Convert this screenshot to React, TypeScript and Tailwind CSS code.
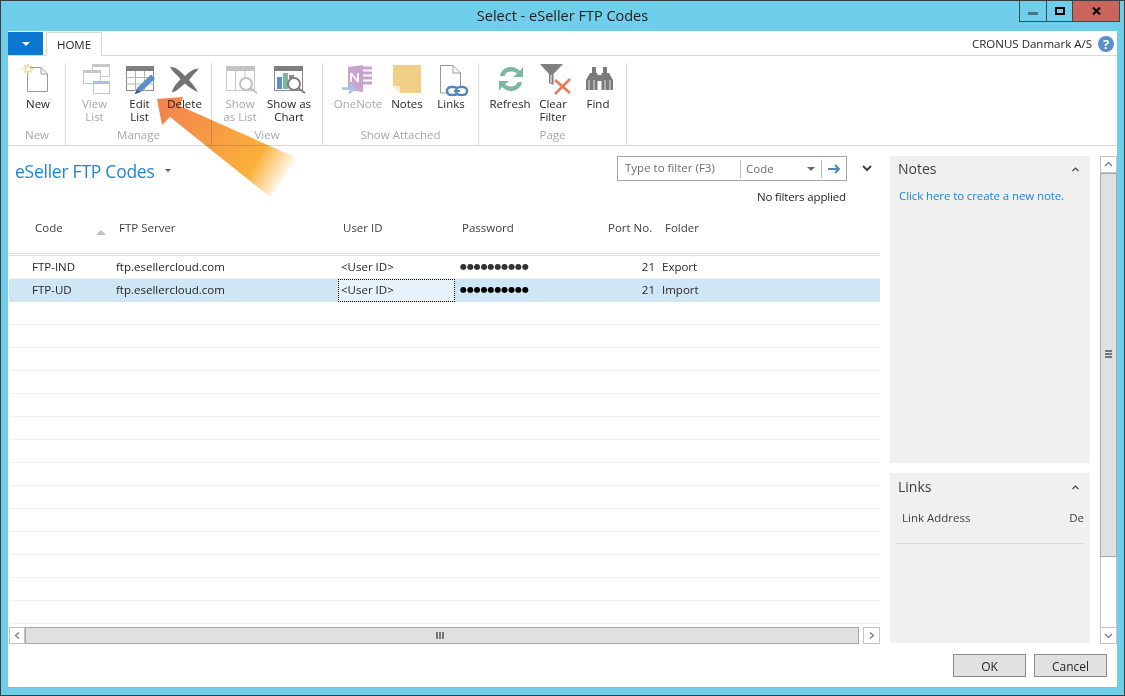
import React from "react";

const ink = "#262626";

function Ic({ vb, children }: { vb: string; children: React.ReactNode }) {
  return (
    <svg width="36" height="34" viewBox={vb} className="block">
      {children}
    </svg>
  );
}

function Item({ w, lines, dim, vb, icon }: { w: string; lines: string[]; dim?: boolean; vb: string; icon: React.ReactNode }) {
  return (
    <div className={`${w} flex flex-col items-center shrink-0`}>
      <Ic vb={vb}>{icon}</Ic>
      <div className={`mt-[1px] text-center text-[11.5px] leading-[13px] whitespace-nowrap ${dim ? "text-[#a8a8a8]" : "text-[#262626]"}`}>
        {lines.map((l) => (
          <div key={l}>{l}</div>
        ))}
      </div>
    </div>
  );
}

function Group({ w, pl, label, children }: { w: string; pl: string; label: string; children: React.ReactNode }) {
  return (
    <div className={`${w} shrink-0 flex flex-col h-[82px] mt-[7px] border-r border-[#d9d9d9]`}>
      <div className={`${pl} flex h-[66px] -mt-[1px]`}>{children}</div>
      <div className="text-center text-[11.5px] leading-[14px] text-[#a8a8a8] whitespace-nowrap">{label}</div>
    </div>
  );
}

const rows = [
  { code: "FTP-IND", server: "ftp.esellercloud.com", user: "<User ID>", port: "21", folder: "Export" },
  { code: "FTP-UD", server: "ftp.esellercloud.com", user: "<User ID>", port: "21", folder: "Import", sel: true },
];

function Chevron({ d, c = "#555" }: { d: string; c?: string }) {
  return (
    <svg width="9" height="7" viewBox="0 0 9 7">
      <path d={d} fill="none" stroke={c} strokeWidth="1.2" />
    </svg>
  );
}

export default function App() {
  return (
    <div
      className="relative w-[1125px] h-[696px] overflow-hidden bg-[#6fcfeb] border border-[#3c3f41] flex flex-col text-[11.5px] text-[#262626]"
      style={{ fontFamily: '"Open Sans", "Noto Sans", sans-serif', color: ink }}
    >
      {/* title bar */}
      <div className="h-[30px] grid grid-cols-[1fr_auto_1fr] shrink-0">
        <div />
        <div className="pt-[6px] text-[14.5px] leading-[18px] text-[#222]">Select - eSeller FTP Codes</div>
        <div className="flex justify-end pr-[4px]">
          <div className="flex h-[21px] border border-t-0 border-[#3f4a50]">
            <div className="w-[27px] flex items-center justify-center border-r border-[#3f4a50]">
              <div className="w-[10px] h-[3px] mt-[4px] bg-[#46768a]" />
            </div>
            <div className="w-[26px] flex items-center justify-center border-r border-[#3f4a50]">
              <div className="w-[10px] h-[8px] border-2 border-black" />
            </div>
            <div className="w-[46px] flex items-center justify-center bg-[#c9655a]">
              <svg width="9" height="8" viewBox="0 0 9 8">
                <path d="M1 0.5 L8 7.5 M8 0.5 L1 7.5" stroke="#000" strokeWidth="2" />
              </svg>
            </div>
          </div>
        </div>
      </div>

      {/* window body */}
      <div className="mx-[7px] h-[657px] bg-white border-b border-[#b0b0b0] flex flex-col shrink-0">
        {/* ribbon tabs */}
        <div className="h-[25px] shrink-0 flex items-end border-b border-[#d9d9d9] relative">
          <div className="w-[35px] h-[23px] mb-0 bg-[#0b78d0] flex items-center justify-center">
            <div className="w-0 h-0 border-l-[4px] border-r-[4px] border-t-[4px] border-l-transparent border-r-transparent border-t-white" />
          </div>
          <div className="ml-[3px] w-[56px] h-[24px] -mb-[1px] bg-white border border-b-0 border-[#d9d9d9] text-center leading-[24px] text-[11.5px]">
            HOME
          </div>
          <div className="flex-1" />
          <div className="mb-[3px] mr-[6px] text-[11.5px] leading-[16px]">CRONUS Danmark A/S</div>
          <div className="mb-[3px] mr-[3px] w-[16px] h-[16px] rounded-full bg-[#5b8fc7] text-white font-bold text-[13px] leading-[16px] text-center">?</div>
        </div>

        {/* ribbon */}
        <div className="h-[90px] shrink-0 border-b border-[#d9d9d9] flex pl-[1px]">
          <Group w="w-[57px]" pl="pl-[8px]" label="New">
            <Item w="w-[42px]" lines={["New"]} vb="20 61 36 34" icon={
              <>
                <path d="M27.5 66.5H41L47.5 73V90.5H27.5Z" fill="#fff" stroke="#9a9a9a" />
                <path d="M41 66.5V73H47.5" fill="none" stroke="#9a9a9a" />
                <g stroke="#f2cf86" strokeWidth="1.6">
                  <path d="M28 63V73M23 68H33M24.5 64.5L31.5 71.5M31.5 64.5L24.5 71.5" />
                </g>
                <circle cx="28" cy="68" r="2" fill="#fff" />
              </>
            } />
          </Group>
          <Group w="w-[146px]" pl="pl-[6px]" label="Manage">
            <Item w="w-[45px]" dim lines={["View", "List"]} vb="76 61 36 34" icon={
              <>
                <rect x="91.5" y="63.5" width="17" height="12" fill="#fff" stroke="#c8c8c8" />
                <rect x="91" y="63" width="18" height="3" fill="#c8c8c8" />
                <rect x="82.5" y="69.5" width="17" height="13" fill="#fff" stroke="#c8c8c8" />
                <rect x="82" y="69" width="18" height="3" fill="#c8c8c8" />
                <rect x="92.5" y="80.5" width="16" height="12" fill="#fff" stroke="#c8c8c8" />
                <rect x="92" y="80" width="17" height="3" fill="#a9c4e0" />
              </>
            } />
            <Item w="w-[45px]" lines={["Edit", "List"]} vb="122 61 36 34" icon={
              <>
                <rect x="126.5" y="65.5" width="27" height="24" fill="#fff" stroke="#8a8a8a" />
                <rect x="126" y="65" width="28" height="5" fill="#7f7f7f" />
                <path d="M126 76.5H154M126 83H154M135.5 70V90M144.5 70V90" stroke="#b5b5b5" />
                <path d="M135 93L137 87L151 73.5L155 77.5L141 91Z" fill="#5b8fc7" />
                <path d="M135 93L137 88L140 91Z" fill="#3d5f85" />
              </>
            } />
            <Item w="w-[45px]" lines={["Delete"]} vb="167 61 36 34" icon={
              <path d="M170 66C176 65.500 181 71 185 75C189 71 194 67.500 199 67.500C196 71 192 75 189 79C192 82.500 196 87 198 91C193 89.500 188.500 85.500 185 82.500C181 86 176 90.500 172 91.500C172.500 87 177 82 180.500 78C177 74 172.500 70.500 170 66Z" fill="#737373" />
            } />
          </Group>
          <Group w="w-[111px]" pl="pl-[5px]" label="View">
            <Item w="w-[46px]" dim lines={["Show", "as List"]} vb="223 61 36 34" icon={
              <>
                <rect x="227.500" y="65.500" width="28" height="24" fill="#fff" stroke="#c8c8c8" />
                <rect x="227" y="65" width="29" height="5" fill="#c4c4c4" />
                <path d="M236.500 70V90M246 70V78" stroke="#c8c8c8" />
                <circle cx="247" cy="83" r="6" fill="#fff" stroke="#c0c0c0" strokeWidth="2" />
                <path d="M251 87L258 92" stroke="#c0c0c0" strokeWidth="2" />
              </>
            } />
            <Item w="w-[52px]" lines={["Show as", "Chart"]} vb="272 61 36 34" icon={
              <>
                <rect x="275.500" y="65.500" width="28" height="24" fill="#fff" stroke="#8a8a8a" />
                <rect x="275" y="65" width="29" height="5" fill="#7f7f7f" />
                <rect x="278" y="76" width="5" height="12" fill="#5b8fc7" />
                <rect x="284" y="72" width="5" height="16" fill="#7fb5a3" />
                <rect x="290" y="74" width="5" height="8" fill="#8a8a8a" />
                <circle cx="295" cy="83" r="6" fill="#fff" stroke="#7f7f7f" strokeWidth="2" />
                <path d="M299 87L306 92" stroke="#7f7f7f" strokeWidth="2" />
              </>
            } />
          </Group>
          <Group w="w-[156px]" pl="pl-[10px]" label="Show Attached">
            <Item w="w-[50px]" dim lines={["OneNote"]} vb="340 61 36 34" icon={
              <>
                <path d="M348 66L363 64V91L348 89Z" fill="#c9a3cf" />
                <path d="M363 67H372M363 72H372M363 77H372M363 82H372" stroke="#c9a3cf" strokeWidth="3" />
                <path d="M351 72V81M351 72L358 81M358 72V81" stroke="#fff" strokeWidth="1.800" fill="none" />
                <path d="M342 87.500H352M349 83L355 87.500L349 92" fill="none" stroke="#a9c4e0" strokeWidth="2.500" />
              </>
            } />
            <Item w="w-[48px]" lines={["Notes"]} vb="389 61 36 34" icon={
              <>
                <path d="M393 64H421V92H400L393 85Z" fill="#f2cf86" />
                <path d="M393 85H400V92Z" fill="#fbeccc" />
              </>
            } />
            <Item w="w-[40px]" lines={["Links"]} vb="433 61 36 34" icon={
              <>
                <path d="M440.500 64.500H453L460.500 72V92H440.500Z" fill="#fff" stroke="#9a9a9a" />
                <path d="M453 64.500V72H460.500" fill="none" stroke="#9a9a9a" />
                <rect x="447" y="86" width="11" height="8" rx="4" fill="#fff" stroke="#4f86bf" strokeWidth="2.500" />
                <rect x="456" y="86" width="11" height="8" rx="4" fill="#fff" stroke="#4f86bf" strokeWidth="2.500" />
                <path d="M454 90H460" stroke="#4f86bf" strokeWidth="2" />
              </>
            } />
          </Group>
          <Group w="w-[148px]" pl="pl-[10px]" label="Page">
            <Item w="w-[42px]" lines={["Refresh"]} vb="492 61 36 34" icon={
              <>
                <path d="M500 75C501 69 506 66 511 66C515 66 518 68 520 70L523 66V76H513L517 72.500C515 71 513 70.500 511 70.500C508 70.500 505 72 504.500 75Z" fill="#7fb5a3" />
                <path d="M522 81C521 87 516 90 511 90C507 90 504 88 502 86L499 90V80H509L505 83.500C507 85 509 85.500 511 85.500C514 85.500 517 84 517.500 81Z" fill="#7fb5a3" />
              </>
            } />
            <Item w="w-[44px]" lines={["Clear", "Filter"]} vb="535 61 36 34" icon={
              <>
                <path d="M540 63H563L553.500 73V84L549 82V73Z" fill="#808080" />
                <path d="M551 74V82" stroke="#d8d8d8" strokeWidth="1.500" />
                <path d="M555 79L570 92M570 78L555 93" stroke="#e3785a" strokeWidth="2.500" />
              </>
            } />
            <Item w="w-[46px]" lines={["Find"]} vb="580 61 36 34" icon={
              <>
                <path d="M592 66H596V72H597.500V89H586V79L590 72H592Z" fill="#7a7a7a" />
                <path d="M603 66H607V72H609L613 79V89H601.500V72H603Z" fill="#7a7a7a" />
                <rect x="597" y="74" width="5" height="6" fill="#7a7a7a" />
                <path d="M589 79V89M594 79V89M605 79V89M610 79V89" stroke="#fff" strokeWidth="1" opacity="0.8" />
              </>
            } />
          </Group>
        </div>

        {/* main */}
        <div className="flex flex-1 min-h-0 pl-[1px]">
          {/* list */}
          <div className="w-[871px] shrink-0 flex flex-col">
            <div className="h-[107px] shrink-0 flex flex-col">
              <div className="flex h-[36px] items-start pt-[10px]">
                <div className="ml-[6px] mt-[3px] text-[17.5px] leading-[24px] text-[#1f84d8] tracking-[-0.25px] whitespace-nowrap">eSeller FTP Codes</div>
                <div className="ml-[10px] mt-[13px] w-0 h-0 border-l-[3px] border-r-[3px] border-t-[3px] border-l-transparent border-r-transparent border-t-[#555]" />
                <div className="flex-1" />
                <div className="w-[230px] h-[25px] border border-[#a6a6a6] flex items-center text-[11.5px] text-[#6e6e6e]">
                  <div className="w-[123px] pl-[7px] border-r border-[#bbb] h-[18px] leading-[16px] whitespace-nowrap">Type to filter (F3)</div>
                  <div className="pl-[5px] flex-1 leading-[18px]">Code</div>
                  <div className="w-0 h-0 mr-[6px] border-l-[4px] border-r-[4px] border-t-[4px] border-l-transparent border-r-transparent border-t-[#666]" />
                  <div className="w-[25px] h-[18px] border-l border-[#bbb] flex items-center justify-center">
                    <svg width="13" height="10" viewBox="0 0 13 10">
                      <path d="M0 5H11M7 1L11 5L7 9" fill="none" stroke="#4f86bf" strokeWidth="2" />
                    </svg>
                  </div>
                </div>
                <div className="w-[33px] h-[25px] pl-[6px] flex items-center justify-center">
                  <svg width="10" height="7" viewBox="0 0 10 7">
                    <path d="M1 1L5 5L9 1" fill="none" stroke="#444" strokeWidth="2" />
                  </svg>
                </div>
              </div>
              <div className="mt-[7px] pr-[34px] text-right leading-[16px] tracking-[-0.15px]">No filters applied</div>
              <div className="mt-[15px] flex leading-[16px] text-[#404040] relative">
                <div className="w-[110px] pl-[26px]">Code</div>
                <div className="w-[224px]">FTP Server</div>
                <div className="w-[119px]">User ID</div>
                <div className="w-[146px]">Password</div>
                <div className="w-[44px] text-right whitespace-nowrap">Port No.</div>
                <div className="pl-[13px]">Folder</div>
                <div className="absolute left-[87px] top-[10px] w-0 h-0 border-l-[5px] border-r-[5px] border-b-[5px] border-l-transparent border-r-transparent border-b-[#c0c0c0]" />
              </div>
            </div>
            <div className="h-[3px] shrink-0 border-y border-[#dedede]" />
            {rows.map((r) => (
              <div key={r.code} className={`h-[23px] shrink-0 flex items-center leading-[16px] border-b ${r.sel ? "bg-[#cfe6f5] border-[#cfe6f5]" : "border-[#f0f0f0]"}`}>
                <div className="w-[107px] pl-[23px]">{r.code}</div>
                <div className="w-[222px]">{r.server}</div>
                <div className={`w-[117px] h-[23px] pl-[2px] leading-[19px] -mb-[1px] ${r.sel ? "bg-[#e6f3fa] border border-dotted border-black" : "border border-transparent"}`}>{r.user}</div>
                <div className={`w-[142px] pl-[5px] text-[8px] tracking-[-0.1px] ${r.sel ? "text-black" : "text-[#333]"}`} style={{ fontFamily: '"DejaVu Sans", sans-serif' }}>●●●●●●●●●●</div>
                <div className="w-[58px] text-right">{r.port}</div>
                <div className="pl-[7px]">{r.folder}</div>
              </div>
            ))}
            {Array.from({ length: 14 }).map((_, i) => (
              <div key={i} className="h-[23px] shrink-0 border-b border-[#f0f0f0]" />
            ))}
            {/* horizontal scrollbar */}
            <div className="mt-[3px] h-[17px] shrink-0 flex">
              <div className="w-[16px] border border-[#c4c4c4] flex items-center justify-center">
                <Chevron d="M6 0.500L2.500 3.500L6 6.500" c="#777" />
              </div>
              <div className="flex-1 bg-[#e0e0e0] border border-[#a8a8a8] flex items-center justify-center pr-[4px]">
                <div className="w-[8px] h-[7px] border-x-2 border-[#777] flex justify-center">
                  <div className="w-[2px] bg-[#777]" />
                </div>
              </div>
              <div className="w-[4px]" />
              <div className="w-[17px] border border-[#c4c4c4] flex items-center justify-center">
                <Chevron d="M3 0.500L6.500 3.500L3 6.500" c="#777" />
              </div>
            </div>
          </div>

          {/* factboxes */}
          <div className="ml-[10px] w-[200px] shrink-0 pt-[10px] flex flex-col gap-[10px]">
            <div className="h-[308px] bg-[#f0f0f0] pt-[4px]">
              <div className="flex items-center justify-between pl-[8px] pr-[10px] text-[14px] leading-[18px] text-[#404040]">
                Notes
                <Chevron d="M1.500 5L4.500 2L7.500 5" c="#444" />
              </div>
              <div className="mt-[10px] pl-[9px] text-[#1f84d8] leading-[16px] tracking-[-0.1px] whitespace-nowrap">Click here to create a new note.</div>
            </div>
            <div className="h-[170px] bg-[#f0f0f0] pt-[5px]">
              <div className="flex items-center justify-between pl-[8px] pr-[10px] text-[14px] leading-[18px] text-[#404040]">
                Links
                <Chevron d="M1.500 5L4.500 2L7.500 5" c="#444" />
              </div>
              <div className="mt-[14px] mx-[6px] pb-[17px] border-b border-[#d9d9d9] flex justify-between leading-[16px] text-[#404040]">
                <span className="pl-[6px]">Link Address</span>
                <span>De</span>
              </div>
            </div>
          </div>

          {/* vertical scrollbar */}
          <div className="ml-[10px] mt-[10px] w-[17px] h-[488px] shrink-0 flex flex-col">
            <div className="h-[17px] border border-[#c4c4c4] flex items-center justify-center">
              <Chevron d="M1 5L4.500 1.500L8 5" c="#777" />
            </div>
            <div className="h-[384px] bg-[#e0e0e0] border border-[#a8a8a8] flex items-center justify-center pb-[22px]">
              <div className="w-[7px] h-[8px] border-y-2 border-[#777] flex items-center">
                <div className="h-[2px] w-full bg-[#777]" />
              </div>
            </div>
            <div className="flex-1 border-x border-[#c4c4c4]" />
            <div className="h-[17px] border border-[#c4c4c4] flex items-center justify-center">
              <Chevron d="M1 2L4.500 5.500L8 2" c="#777" />
            </div>
          </div>
        </div>

        {/* footer */}
        <div className="h-[44px] shrink-0 flex justify-end items-start pt-[11px] pr-[10px] gap-[8px]">
          <div className="w-[73px] h-[23px] bg-[#e1e1e1] border border-[#8a8a8a] text-center leading-[23px] text-[12px]">OK</div>
          <div className="w-[73px] h-[23px] bg-[#e1e1e1] border border-[#8a8a8a] text-center leading-[23px] text-[12px]">Cancel</div>
        </div>
      </div>

      {/* orange annotation arrow */}
      <svg className="absolute left-[-1px] top-[-1px] pointer-events-none mix-blend-multiply" width="1125" height="696">
        <defs>
          <linearGradient id="arrow" gradientUnits="userSpaceOnUse" x1="165" y1="105" x2="288" y2="178">
            <stop offset="0" stopColor="#f2844e" />
            <stop offset="0.75" stopColor="#fbb03b" />
            <stop offset="1" stopColor="#fbb03b" stopOpacity="0" />
          </linearGradient>
        </defs>
        <polygon points="157,99 183,97 180,106 297,158 270,197 170,117 162,125" fill="url(#arrow)" />
      </svg>
    </div>
  );
}
